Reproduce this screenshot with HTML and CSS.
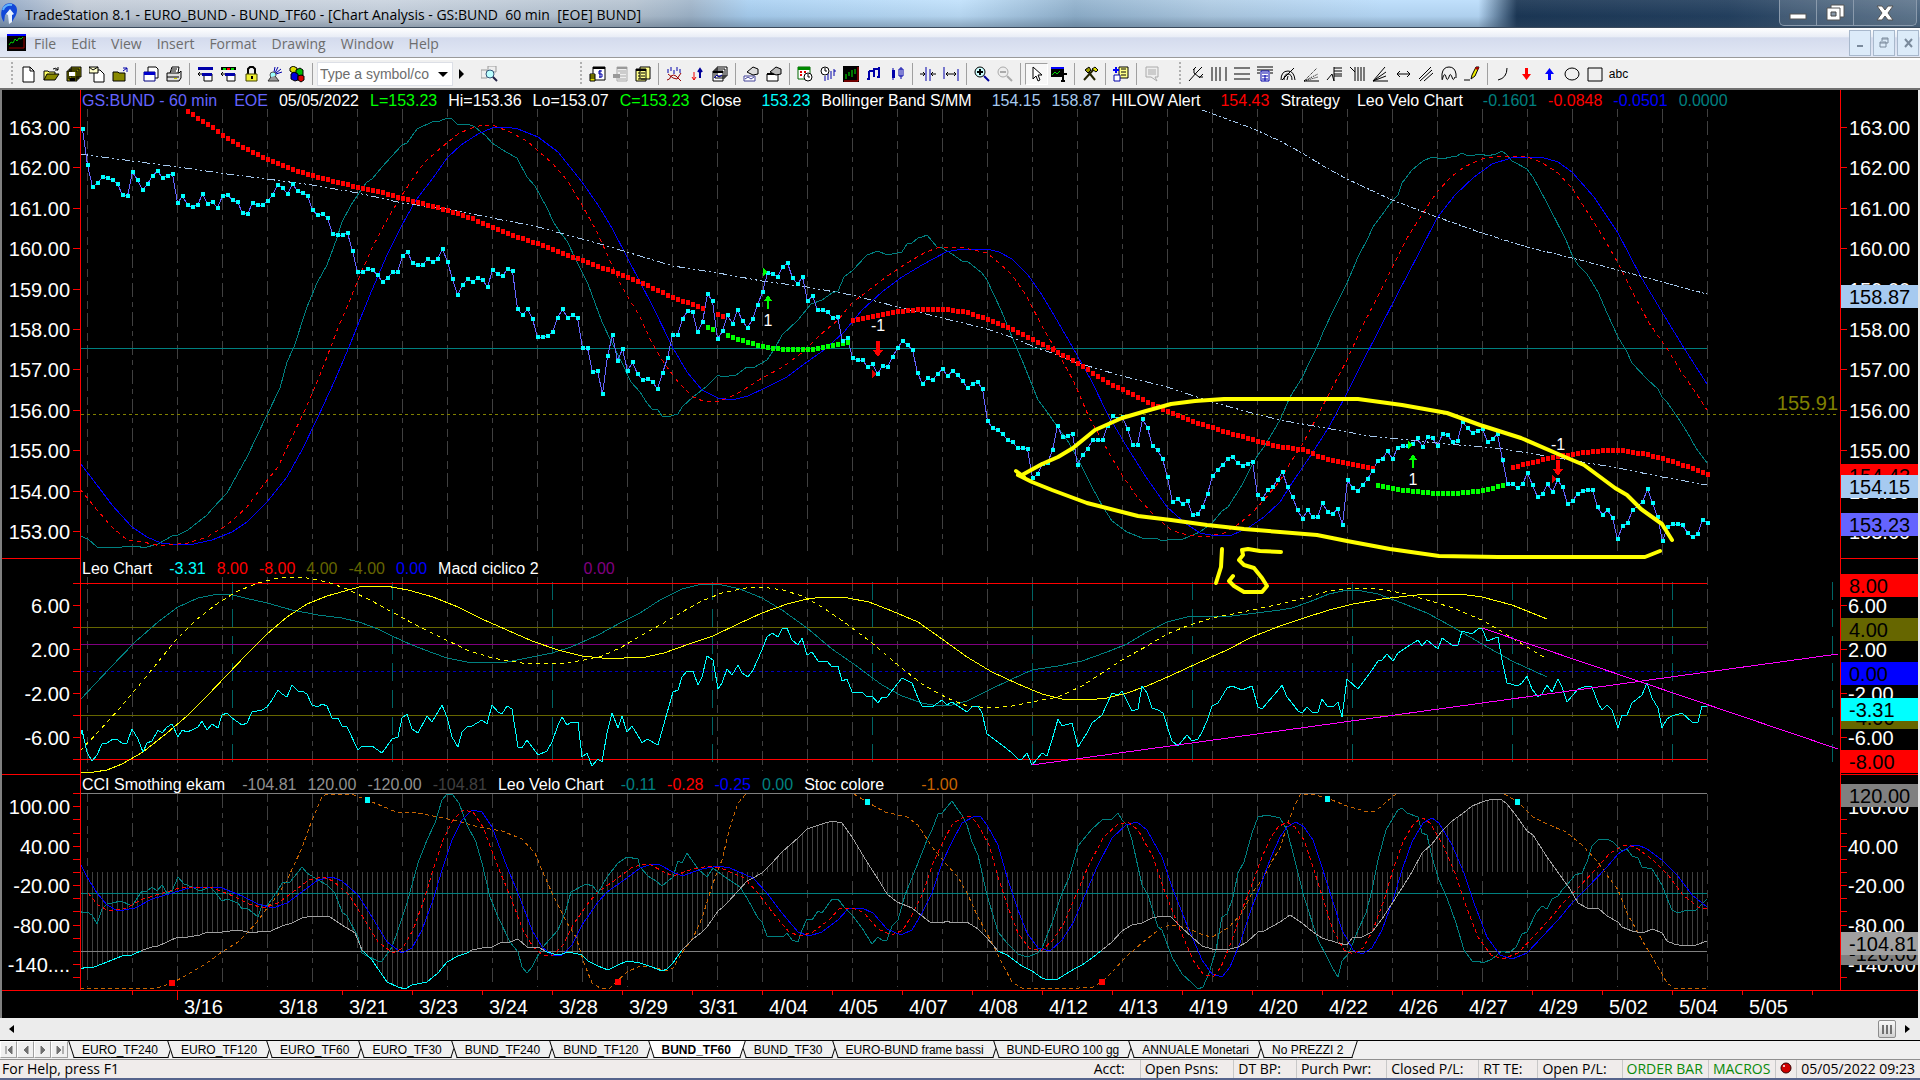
FILE: index.html
```html
<!DOCTYPE html>
<html lang="en">
<head>
    <meta charset="utf-8">
    <title>TradeStation 8.1 - EURO_BUND</title>
    <link rel="stylesheet" href="styles.css">
</head>
<body>
    <header class="titlebar">
        <svg class="app-icon" width="18" height="24" viewBox="0 0 18 24">
            <path d="M4 20C0 15 0 6 6 2c5-2 11 0 11 6 0 5-3 8-5 12l-2-6-2-4-3 3z" fill="#1247d8"/>
            <path d="M6 12l4-5 4 5-2 1v7l-3 2-1-9z" fill="#e8f2ff"/>
            <path d="M3 8C4 4 8 2 12 3" stroke="#5fb4ff" stroke-width="2" fill="none"/>
        </svg>
        <span class="title">TradeStation 8.1 - EURO_BUND - BUND_TF60 - [Chart Analysis - GS:BUND&nbsp; 60 min&nbsp; [EOE] BUND]</span>
        <div class="win-buttons">
            <button aria-label="Minimize"><svg width="18" height="18"><rect x="1" y="10" width="16" height="5" fill="#fff" stroke="#555"/></svg></button>
            <button aria-label="Restore"><svg width="20" height="18"><path d="M6 1h13v12h-13z" fill="#fff" stroke="#555"/><path d="M2 4h13v12h-13z" fill="#fff" stroke="#555"/><path d="M6 8h5v4h-5z" fill="#8898a8" stroke="#444"/></svg></button>
            <button class="close" aria-label="Close"><svg width="20" height="18"><path d="M2 2h5l3 4 3-4h5l-5 7 5 7h-5l-3-4-3 4h-5l5-7z" fill="#fff" stroke="#555"/></svg></button>
        </div>
    </header>

    <nav class="menubar">
        <svg class="doc-icon" width="19" height="17"><path d="M0 0h19v17h-19z" fill="#000"/><path d="M0 0h19v2h-19z" fill="#00f"/><path d="M2 11l2-3 2 1 2-4 2 2 2-3 2 1 2-2" stroke="#0c0" fill="none"/><path d="M2 14h15v-11" stroke="#900" fill="none"/></svg>
        <a href="#">File</a>
        <a href="#">Edit</a>
        <a href="#">View</a>
        <a href="#">Insert</a>
        <a href="#">Format</a>
        <a href="#">Drawing</a>
        <a href="#">Window</a>
        <a href="#">Help</a>
        <div class="mdi-buttons">
            <button aria-label="Minimize chart"><svg width="12" height="12"><path d="M3 8h6v2h-6z" fill="#7a8a9c"/></svg></button>
            <button aria-label="Restore chart"><svg width="12" height="12"><path d="M4 4v-3h6v5h-2M2 5h6v5h-6zM2 6h6M4 2h6" stroke="#7a8a9c" fill="none"/></svg></button>
            <button aria-label="Close chart"><svg width="12" height="12"><path d="M3 2l7 8M10 2l-7 8" stroke="#7a8a9c" stroke-width="2"/></svg></button>
        </div>
    </nav>

    <div class="toolbar">
        <i class="grip"></i>
        <button data-icon="page" aria-label="New"></button>
        <button data-icon="open" aria-label="Open"></button>
        <button data-icon="saveall" aria-label="Save all"></button>
        <button data-icon="mailpage" aria-label="New from template"></button>
        <button data-icon="folder" aria-label="Close workspace"></button>
        <i class="sep"></i>
        <button data-icon="preview" aria-label="Print preview"></button>
        <button data-icon="print" aria-label="Print"></button>
        <i class="sep"></i>
        <button data-icon="barblue" aria-label="Shortcut bar"></button>
        <button data-icon="barcolor" aria-label="Status bar"></button>
        <button data-icon="lock" aria-label="Lock"></button>
        <button data-icon="dish" aria-label="Data network"></button>
        <button data-icon="cubes" aria-label="Power editor"></button>
        <i class="sep"></i>
        <div class="symbol-box">
            <input type="text" placeholder="Type a symbol/co" aria-label="Symbol or command">
            <button aria-label="Symbol list"><svg width="12" height="7"><path d="M1 1h10l-5 5z"/></svg></button>
        </div>
        <button class="go" aria-label="Go"><svg width="6" height="10"><path d="M0 0v10l5-5z"/></svg></button>
        <button data-icon="find" aria-label="Symbol lookup"></button>
        <i class="grip second"></i>
        <button data-icon="money" aria-label="Account"></button>
        <button data-icon="hand" aria-label="Order"></button>
        <button data-icon="list" aria-label="List"></button>
        <i class="sep"></i>
        <button data-icon="study" aria-label="Insert analysis"></button>
        <button data-icon="updown" aria-label="Insert strategy"></button>
        <button data-icon="stack" aria-label="Charts"></button>
        <i class="sep"></i>
        <button data-icon="formatsym" aria-label="Format symbol"></button>
        <button data-icon="formatwin" aria-label="Format window"></button>
        <i class="sep"></i>
        <button data-icon="calclock" aria-label="Sessions"></button>
        <button data-icon="clockbars" aria-label="Interval"></button>
        <button data-icon="screen" aria-label="Chart style"></button>
        <button data-icon="bars" aria-label="OHLC bars"></button>
        <button data-icon="candles" aria-label="Candlesticks"></button>
        <i class="sep"></i>
        <button data-icon="narrow" aria-label="Decrease spacing"></button>
        <button data-icon="widen" aria-label="Increase spacing"></button>
        <i class="sep"></i>
        <button data-icon="zoomin" aria-label="Zoom in"></button>
        <button data-icon="zoomout" aria-label="Zoom out"></button>
        <i class="sep"></i>
        <button class="pressed" data-icon="pointer" aria-label="Pointer"></button>
        <button data-icon="charttext" aria-label="Data tip"></button>
        <i class="sep"></i>
        <button data-icon="tools" aria-label="Tools"></button>
        <i class="sep"></i>
        <button data-icon="addlist" aria-label="Add to list"></button>
        <i class="sep"></i>
        <button data-icon="note" aria-label="Note"></button>
        <i class="grip third"></i>
        <button data-icon="fork" aria-label="Andrews pitchfork"></button>
        <button data-icon="vlines" aria-label="Time cycles"></button>
        <button data-icon="hlines" aria-label="Horizontal lines"></button>
        <button data-icon="calc" aria-label="Calculator lines"></button>
        <button data-icon="arcs" aria-label="Speed arcs"></button>
        <button data-icon="fan" aria-label="Gann fan"></button>
        <button data-icon="retrace" aria-label="Retracement"></button>
        <button data-icon="timezones" aria-label="Time zones"></button>
        <button data-icon="fan2" aria-label="Speed lines"></button>
        <button data-icon="extend" aria-label="Extend"></button>
        <button data-icon="parallel" aria-label="Parallel lines"></button>
        <button data-icon="ghost" aria-label="Cycle"></button>
        <button data-icon="pencil" aria-label="Trendline"></button>
        <i class="sep"></i>
        <button data-icon="arc" aria-label="Arc"></button>
        <button data-icon="down" aria-label="Down arrow"></button>
        <button data-icon="up" aria-label="Up arrow"></button>
        <button data-icon="ellipse" aria-label="Ellipse"></button>
        <button data-icon="rect" aria-label="Rectangle"></button>
        <button class="abc">abc</button>
    </div>

    <main class="chart" id="chart">
        <svg id="plot"></svg>
        <div class="legend price">
            <span class="violet">GS:BUND - 60 min</span>
            <span class="violet wide">EOE</span>
            <span>05/05/2022</span>
            <span class="green">L=153.23</span>
            <span>Hi=153.36</span>
            <span>Lo=153.07</span>
            <span class="green">C=153.23</span>
            <span>Close</span>
            <span class="cyan wider">153.23</span>
            <span>Bollinger Band S/MM</span>
            <span class="sky wider">154.15</span>
            <span class="sky">158.87</span>
            <span>HILOW Alert</span>
            <span class="red wider">154.43</span>
            <span>Strategy</span>
            <span class="wide">Leo Velo Chart</span>
            <span class="teal wider">-0.1601</span>
            <span class="red">-0.0848</span>
            <span class="blue">-0.0501</span>
            <span class="teal">0.0000</span>
        </div>
        <div class="legend leo">
            <span>Leo Chart</span>
            <span class="cyan wide">-3.31</span>
            <span class="red">8.00</span>
            <span class="red">-8.00</span>
            <span class="olive">4.00</span>
            <span class="olive">-4.00</span>
            <span class="blue">0.00</span>
            <span>Macd ciclico 2</span>
            <span class="purple widest">0.00</span>
        </div>
        <div class="legend cci">
            <span>CCI Smothing ekam</span>
            <span class="gray wide">-104.81</span>
            <span class="gray">120.00</span>
            <span class="gray">-120.00</span>
            <span class="dark">-104.81</span>
            <span>Leo Velo Chart</span>
            <span class="teal wide">-0.11</span>
            <span class="red">-0.28</span>
            <span class="blue">-0.25</span>
            <span class="teal">0.00</span>
            <span>Stoc colore</span>
            <span class="orange wider2">-1.00</span>
        </div>
    </main>

    <div class="scrollbar">
        <button aria-label="Scroll left"><svg width="5" height="8"><path d="M5 0v8l-5-4z"/></svg></button>
        <button class="thumb" aria-label="Scroll thumb"><i></i><i></i><i></i></button>
        <button aria-label="Scroll right"><svg width="5" height="8"><path d="M0 0v8l5-4z"/></svg></button>
    </div>

    <div class="tabs">
        <div class="tab-nav">
            <button aria-label="First"><svg width="8" height="8"><path d="M1 0v8M7 0v8l-4-4z"/></svg></button>
            <button aria-label="Previous"><svg width="8" height="8"><path d="M6 0v8l-4-4z"/></svg></button>
            <button aria-label="Next"><svg width="8" height="8"><path d="M2 0v8l4-4z"/></svg></button>
            <button aria-label="Last"><svg width="8" height="8"><path d="M7 0v8M1 0v8l4-4z"/></svg></button>
        </div>
        <button class="tab">EURO_TF240</button>
        <button class="tab">EURO_TF120</button>
        <button class="tab">EURO_TF60</button>
        <button class="tab">EURO_TF30</button>
        <button class="tab">BUND_TF240</button>
        <button class="tab">BUND_TF120</button>
        <button class="tab active">BUND_TF60</button>
        <button class="tab">BUND_TF30</button>
        <button class="tab">EURO-BUND frame bassi</button>
        <button class="tab">BUND-EURO 100 gg</button>
        <button class="tab">ANNUALE Monetari</button>
        <button class="tab">No PREZZI 2</button>
    </div>

    <footer class="statusbar">
        <span class="help">For Help, press F1</span>
        <span>Acct:</span>
        <span>Open Psns:</span>
        <span>DT BP:</span>
        <span>Purch Pwr:</span>
        <span>Closed P/L:</span>
        <span>RT TE:</span>
        <span>Open P/L:</span>
        <span class="on">ORDER BAR</span>
        <span class="on">MACROS</span>
        <span class="led"><svg width="12" height="12"><circle cx="6" cy="6" r="5" fill="#d00000" stroke="#300"/><circle cx="4" cy="4" r="1" fill="#fff"/></svg></span>
        <span class="clock">05/05/2022 09:23</span>
    </footer>

    <script src="chart.js"></script>
</body>
</html>
```
FILE: styles.css
```css
* {
    box-sizing: border-box;
}
body {
    margin: 0;
    height: 100vh;
    display: flex;
    flex-direction: column;
    overflow: hidden;
    background: #f0f0f0;
    font-family: "Open Sans", "Noto Sans", sans-serif;
    font-size: 14px;
    color: #000;
}
button {
    margin: 0;
    padding: 0;
    border: 0;
    background: none;
    font: inherit;
    color: inherit;
    display: flex;
    align-items: center;
    justify-content: center;
}

/* title bar */
.titlebar {
    height: 28px;
    flex: none;
    display: flex;
    align-items: center;
    gap: 7px;
    border-bottom: 1px solid #3a4a5c;
    background: linear-gradient(to bottom, rgba(255,255,255,0.1), rgba(80,100,120,0.1) 60%, rgba(60,80,100,0.4)),
        linear-gradient(to right, #8fa6c4 0, #c3ccd8 4%, #c8d2de 20%, #b4c2d0 33%, #9fb4c9 36%, #a9d0f2 39%, #bfe0fb 50%, #8fb0cc 56%, #aecbe4 63%, #b9dcfb 72%, #b9dcfb 77%, #14304f 79%, #1d3a5a 90%, #4a647e 100%);
}
.title {
    flex: 1;
    padding-top: 2px;
    white-space: nowrap;
    line-height: 20px;
}
.win-buttons {
    display: flex;
    align-self: flex-start;
    margin-right: 3px;
    height: 26px;
    border: 1px solid #8a9aac;
    border-top: 0;
    border-radius: 0 0 5px 5px;
    background: rgba(255,255,255,0.1);
}
.win-buttons button {
    width: 37px;
    border-right: 1px solid #8a9aac;
}
.win-buttons .close {
    width: 62px;
    border-right: 0;
}

/* menu */
.menubar {
    height: 30px;
    flex: none;
    display: flex;
    align-items: center;
    gap: 15px;
    padding-left: 7px;
    background: linear-gradient(#fff, #e9edf6 30%, #d4dbed 34%, #e0e6f4 90%);
    border-bottom: 1px solid #9a9a9a;
}
.menubar a {
    padding-top: 2px;
    color: #6d6d6d;
    text-decoration: none;
}
.doc-icon {
    margin-right: -7px;
}
.mdi-buttons {
    margin-left: auto;
    display: flex;
    gap: 2px;
    padding-right: 1px;
}
.mdi-buttons button {
    width: 22px;
    height: 26px;
    border: 1px solid #a8b8cc;
    background: #dcebf9;
}

/* toolbar */
.toolbar {
    height: 32px;
    flex: none;
    display: flex;
    align-items: center;
    padding-left: 11px;
    border-bottom: 2px solid #707070;
    border-top: 2px solid #fff;
    overflow: hidden;
}
.toolbar > button {
    width: 23px;
    height: 22px;
    flex: none;
}
.toolbar .pressed {
    border: 1px solid #a0a0a0;
    border-right-color: #fff;
    border-bottom-color: #fff;
    background: #f8f8f8;
}
.grip {
    width: 2px;
    height: 24px;
    margin-right: 4px;
    flex: none;
    background: repeating-linear-gradient(#b0b0b0 0 2px, transparent 2px 4px);
}
.grip.second {
    margin-left: 79px;
}
.grip.third {
    margin-left: 15px;
}
.sep {
    width: 1px;
    height: 22px;
    margin: 0 4px 0 3px;
    flex: none;
    background: #a0a0a0;
}
.symbol-box {
    width: 136px;
    height: 24px;
    flex: none;
    display: flex;
    background: #fff;
    border: 1px solid #dcdfe6;
}
.symbol-box input {
    flex: 1;
    min-width: 0;
    border: 0;
    padding: 0 0 0 2px;
    background: none;
    font: 14px "Liberation Sans", Arial, sans-serif;
}
.symbol-box input::placeholder {
    color: #6d6d6d;
}
.symbol-box button {
    width: 18px;
}
.toolbar .go {
    width: 18px;
    margin-right: 7px;
}
.toolbar .abc {
    font: 12px "Liberation Sans", Arial, sans-serif;
}

/* chart */
.chart {
    flex: 1;
    min-height: 0;
    display: grid;
    grid-template-columns: minmax(0, 1fr);
    grid-template-rows: minmax(0, 468fr) minmax(0, 216fr) minmax(0, 244fr);
    background: #000;
    font-family: "Liberation Sans", Arial, sans-serif;
}
#plot {
    grid-area: 1 / 1 / 4 / 2;
    width: 100%;
    height: 100%;
}
#plot text {
    font-size: 20px;
    fill: #fff;
}
#plot text.signal {
    font-size: 16px;
}
#plot text.level {
    fill: #808000;
}
#plot text.tag {
    fill: #000;
}
.legend {
    grid-column: 1;
    display: flex;
    align-items: flex-start;
    gap: 11px;
    padding: 1px 0 0 82px;
    font-size: 16px;
    line-height: 20px;
    color: #fff;
    white-space: nowrap;
}
.price { grid-row: 1; }
.leo { grid-row: 2; }
.cci { grid-row: 3; }
.wide { margin-left: 6px; }
.wider { margin-left: 9px; }
.wider2 { margin-left: 26px; }
.widest { margin-left: 34px; }
.violet { color: #6464ff; }
.green { color: #0f0; }
.cyan { color: #0ff; }
.sky { color: #a6caf0; }
.red { color: #f00; }
.teal { color: #008080; }
.blue { color: #00f; }
.olive { color: #666600; }
.purple { color: #800080; }
.gray { color: #909090; }
.dark { color: #404040; }
.orange { color: #c86400; }

/* scrollbar */
.scrollbar {
    height: 22px;
    flex: none;
    display: flex;
    align-items: center;
    padding: 0 4px 0 3px;
    background: #ececec;
}
.scrollbar button {
    width: 17px;
    height: 18px;
}
.scrollbar .thumb {
    width: 18px;
    margin-left: auto;
    margin-right: 3px;
    gap: 2px;
    border: 1px solid #8c8c8c;
    border-radius: 2px;
    background: linear-gradient(to bottom, #f8f8f8, #d0d0d0);
}
.thumb i {
    width: 2px;
    height: 9px;
    background: #707070;
}

/* workspace tabs */
.tabs {
    height: 19px;
    flex: none;
    display: flex;
    border-top: 1px solid #000;
    font-family: "Liberation Sans", Arial, sans-serif;
    font-size: 12px;
    background: #f0f0f0;
}
.tab-nav {
    display: flex;
    margin-right: 6px;
}
.tab-nav button {
    width: 17px;
    height: 17px;
    border: 1px solid #a0a0a0;
    border-left-color: #fff;
    border-top-color: #fff;
}
.tab-nav path {
    fill: #707070;
    stroke: #707070;
}
.tab {
    position: relative;
    z-index: 0;
    height: 17px;
    padding: 0 15px 0 14px;
    margin-left: -6px;
    white-space: nowrap;
    background: none;
}
.tab::before,
.tab::after {
    content: "";
    position: absolute;
    z-index: -1;
    top: 0;
    bottom: 0;
    background: #f0f0f0;
    border-bottom: 1px solid #000;
}
.tab::before {
    left: 3px;
    right: 50%;
    border-left: 1px solid #000;
    transform: skewX(18deg);
}
.tab::after {
    left: calc(50% - 8px);
    right: 3px;
    border-right: 1px solid #000;
    transform: skewX(-18deg);
}
.tab.active {
    z-index: 1;
    font-weight: bold;
}
.tab.active::before,
.tab.active::after {
    background: #fff;
}

/* status bar */
.statusbar {
    height: 21px;
    flex: none;
    display: flex;
    align-items: center;
    border-top: 1px solid #909090;
    border-bottom: 2px solid #56648c;
    background: #f0eceb;
    line-height: 18px;
    white-space: nowrap;
}
.statusbar span {
    padding: 0 15px 0 4px;
    border-right: 1px solid #c8c8c8;
}
.statusbar .help {
    flex: 1;
    padding-left: 2px;
    border: 0;
}
.statusbar .on {
    padding-right: 5px;
    color: #0a8a0a;
}
.statusbar .led {
    padding: 0 4px;
}
.statusbar .clock {
    padding-right: 5px;
    border: 0;
}
```
FILE: chart.js
```js
// toolbar icons, 16x16
const icons = {
    page: '<path d="M3 1h7l4 4v11h-11z" fill="#fff" stroke="#000"/><path d="M10 1v4h4" fill="none" stroke="#000"/>',
    open: '<path d="M1 14v-9h4l1 1h6v3" fill="#ff6" stroke="#000"/><path d="M1 14l3-6h12l-4 6z" fill="#880" stroke="#000"/><path d="M10 3q3-2 5 1m0-3v3h-3" fill="none" stroke="#000"/>',
    saveall: '<path d="M5 1h10v10h-10zM3 3h10v10h-10zM1 5h10v10h-10z" fill="#880" stroke="#000"/><path d="M3 6h6v4h-6z" fill="#fff"/><path d="M4 12h5v3h-5z" fill="#000"/>',
    mailpage: '<path d="M5 4h6l4 4v8h-10z" fill="#fff" stroke="#000"/><path d="M0 1h9v6h-9z" fill="#ffc" stroke="#000"/><path d="M0 1l4 3 5-3" fill="none" stroke="#000"/>',
    folder: '<path d="M1 15v-9h5l1 1h6v8z" fill="#880" stroke="#000"/><path d="M11 2h4v4M15 2l-4 3" fill="none" stroke="#00a"/>',
    preview: '<path d="M5 1h8l2 2v9h-10z" fill="#fff" stroke="#000"/><path d="M1 6h11v9h-11z" fill="#fff" stroke="#000080"/><path d="M1 6h11v3h-11z" fill="#00c"/>',
    print: '<path d="M4 7l2-6h7l-1 6" fill="#fff" stroke="#000"/><path d="M1 7h12l2-2v7l-2 3h-12z" fill="#ddd" stroke="#000"/><path d="M1 11h12M6 3h5M5 5h5" stroke="#000"/><path d="M8 12h3v1h-3z" fill="#cc0"/>',
    barblue: '<path d="M1 1h15v3h-15z" fill="#00a"/><path d="M5 8h10v7h-8v-7" fill="#fff" stroke="#000"/><path d="M5 7h10v3h-10z" fill="#00a"/><path d="M1 8h4m-2-2l-2 2 2 2" stroke="#000" fill="none"/>',
    barcolor: '<path d="M1 1h15v3h-15z" fill="#000"/><path d="M3 2h3v2h-3z" fill="#0d0"/><path d="M7 2h3v2h-3z" fill="#f00"/><path d="M11 2h3v2h-3z" fill="#0d0"/><path d="M5 8h10v7h-8v-7" fill="#fff" stroke="#000"/><path d="M5 7h10v3h-10z" fill="#00a"/><path d="M1 8h4m-2-2l-2 2 2 2" stroke="#000" fill="none"/>',
    lock: '<path d="M5 8v-5l2-2h3l2 2v5" fill="none" stroke="#000" stroke-width="2"/><path d="M3 8h11v7h-11z" fill="#ee3" stroke="#440"/><path d="M8 10h2v3h-2z"/>',
    dish: '<path d="M9 1l-1 5M12 1l-3 6M15 3l-5 4M16 6l-6 2" stroke="#00a"/><circle cx="7" cy="9" r="3" fill="#9ff" stroke="#555"/><path d="M5 11l-3 4h11l-4-5" fill="#999" stroke="#333"/>',
    cubes: '<path d="M1 2l3-2 4 2v4l-4 1-3-2z" fill="#dd0" stroke="#000"/><path d="M7 4l4-2 3 2v5l-4 1-3-2z" fill="#0b0" stroke="#000"/><path d="M2 8l3-2 4 2v6l-3 1-4-2z" fill="#00d" stroke="#000"/><path d="M9 10l3-1 3 1v4l-3 2-3-2z" fill="#d00" stroke="#000"/>',
    find: '<path d="M0 4h6v8h-6zM7 0h8v6h-8z" fill="#eee" stroke="#999"/><circle cx="9" cy="8" r="4" fill="#bff" stroke="#357"/><path d="M12 11l4 4" stroke="#224" stroke-width="2"/>',
    money: '<path d="M4 1h12v13h-12z" fill="#fff" stroke="#000"/><path d="M4 1h12v2h-12z"/><path d="M13 5h-3v3h3v3h-3M11 4v8" stroke="#00a" fill="none"/><path d="M1 8h5v7h-5z" fill="#dd0" stroke="#000"/><path d="M1 10h5M1 12h5" stroke="#000"/>',
    hand: '<path d="M5 1h10v14h-10z" fill="#eee" stroke="#aaa"/><path d="M5 1h10v2h-10zM1 8h7v4h-7z" fill="#999"/><path d="M6 5h8M8 7h6M8 10h6M6 13h8" stroke="#aaa"/>',
    list: '<path d="M5 1h10v12h-10zM1 3h10v12h-10z" fill="#ff8" stroke="#000"/><path d="M1 3h10v2h-10z"/><path d="M3 7h2M6 7h4M3 10h2M6 10h4M3 13h2M6 13h4" stroke="#000"/>',
    study: '<path d="M2 3v4M5 1v4M8 4v4M11 1v4M14 3v4" stroke="#00a"/><path d="M1 14q3 0 4-4 3-2 5 0l5 5M2 8l5 4 4 1 4-6" fill="none" stroke="#900"/>',
    updown: '<path d="M5 6v8m-2-3l2 3 2-3" stroke="#e00" stroke-width="1" fill="none"/><path d="M11 12v-9m-2 3l2-3 2 3" stroke="#009" stroke-width="2" fill="none"/>',
    stack: '<path d="M5 1h10v9h-10zM3 3h10v9h-10zM1 5h10v10h-10z" fill="#fff" stroke="#000"/><path d="M1 6h10" stroke="#000" stroke-width="2"/><path d="M2 12l3-3 2 2 3-2" stroke="#00a" fill="none"/>',
    formatsym: '<path d="M1 10h11v5h-11z" fill="#fff" stroke="#449"/><path d="M2 13l3-2 3 2 3-2" stroke="#449" fill="none"/><path d="M4 6l6-5 5 2v5l-5 1z" fill="#ddd" stroke="#000"/>',
    formatwin: '<path d="M1 8h11v7h-11z" fill="#fff" stroke="#000"/><path d="M1 7h11v2h-11z"/><path d="M4 6l6-5 5 2v5l-5 1z" fill="#bbb" stroke="#000"/>',
    calclock: '<path d="M1 1h12v12h-12z" fill="#fff" stroke="#060"/><path d="M1 1h12v3h-12z" fill="#080"/><path d="M3 6h2M7 6h2M3 9h2" stroke="#d00" stroke-width="2"/><circle cx="11" cy="11" r="4" fill="#fff" stroke="#000"/><path d="M11 8v3h2" stroke="#000" fill="none"/>',
    clockbars: '<circle cx="5" cy="5" r="4" fill="#fff" stroke="#000"/><path d="M5 2v3h2" stroke="#000" fill="none"/><path d="M5 10v5M8 8v6M11 5v8M14 3v7M14 5h2" stroke="#00a"/>',
    screen: '<path d="M0 0h16v16h-16z"/><path d="M3 8v5M6 6v4M9 4v7M12 3v5" stroke="#0e0"/><path d="M1 15h14v-14" stroke="#d00" fill="none"/>',
    bars: '<path d="M3 5v9M8 2v9M13 1v11M1 13h2M3 5h5M8 3h5M11 11h2" stroke="#00a" stroke-width="2"/>',
    candles: '<path d="M3 4h3v8h-3z" fill="#00a"/><path d="M10 3h4v7h-4z" fill="#fff" stroke="#00a"/><path d="M4 2v12M12 1v12" stroke="#00a"/>',
    narrow: '<path d="M6 1v14M10 3v12" stroke="#00a"/><path d="M0 8h5m-2-2l2 2-2 2M16 8h-5m2-2l-2 2 2 2" stroke="#000" fill="none"/>',
    widen: '<path d="M1 1v12M15 3v12" stroke="#00a"/><path d="M3 8h10M5 6l-2 2 2 2M11 6l2 2-2 2" stroke="#000" fill="none"/>',
    zoomin: '<circle cx="6" cy="6" r="5" fill="#cff" stroke="#000"/><path d="M3 6h6M6 3v6" stroke="#000" stroke-width="2"/><path d="M10 10l5 5" stroke="#009" stroke-width="2"/>',
    zoomout: '<circle cx="6" cy="6" r="5" fill="#eee" stroke="#aaa"/><path d="M3 6h6" stroke="#aaa" stroke-width="2"/><path d="M10 10l5 5" stroke="#aaa" stroke-width="2"/>',
    pointer: '<path d="M5 1v12l3-3 2 5 2-1-2-5h4z" fill="#fff" stroke="#000"/>',
    charttext: '<path d="M0 1h13v10h-13z"/><path d="M0 1h13v2h-13z" fill="#00f"/><path d="M1 9l3-3 2 2 3-3" stroke="#0d0" fill="none"/><path d="M8 8h8M12 8v8M10 15h4" stroke="#000" stroke-width="2"/>',
    tools: '<path d="M2 14l10-11M4 3l9 11" stroke="#220" stroke-width="2"/><path d="M3 4l4-3 2 3-3 3z" fill="#990" stroke="#000"/><path d="M10 3l3-2 3 3-2 2z" fill="#dd0" stroke="#000"/>',
    addlist: '<path d="M6 1h9v11h-9z" fill="#ff8" stroke="#000"/><path d="M8 3h5M8 6h5M8 9h5" stroke="#000"/><path d="M1 9h6v6h-6z" fill="#fff" stroke="#00a"/><path d="M3 1v6M0 4h6" stroke="#00f" stroke-width="2"/>',
    note: '<path d="M2 1h12v10h-3l2 4-6-4h-5z" fill="#eee" stroke="#aaa"/><path d="M4 4h8M4 6h8M4 8h8" stroke="#aaa"/>',
    fork: '<path d="M1 15l8-9M9 6l5-5M6 3v4l5 4h4M8 1l-3 3M15 8l-4 4" fill="none" stroke="#000"/>',
    vlines: '<path d="M1 1v14M5 1v14M9 1v14M15 1v14" stroke="#000"/>',
    hlines: '<path d="M0 2h16M0 8h16M0 13h16" stroke="#000"/>',
    calc: '<path d="M0 1h16M0 4h16M0 7h3M13 7h3" stroke="#000"/><path d="M4 5h8v10h-8z" fill="#fff" stroke="#00a"/><path d="M5 7h6M5 10h6M5 13h6M8 9v6" stroke="#00a"/>',
    arcs: '<path d="M1 14q0-9 7-9 6 0 7 9M4 14q0-6 4-6 4 0 4 6M2 14l12-12M7 14l1-4" fill="none" stroke="#000"/>',
    fan: '<path d="M1 15h15" stroke="#000"/><path d="M1 15l13-13M1 15l14-7M1 15l14-4" stroke="#000" stroke-dasharray="1 1"/>',
    retrace: '<path d="M1 14l5-6 2 7v-14" fill="none" stroke="#000"/><path d="M8 2h8M8 5h8M8 8h8M8 10h8" stroke="#000"/>',
    timezones: '<path d="M1 1l5 5M6 1v14M9 1v14M12 1v14M15 1v14" stroke="#000"/>',
    fan2: '<path d="M1 15h15M1 15l12-14M1 15l13-9M1 15l13-5" fill="none" stroke="#000"/>',
    extend: '<path d="M2 8h13M5 5l-3 3 3 3M12 5l3 3-3 3" stroke="#000" fill="none"/>',
    parallel: '<path d="M1 13l12-12M2 15l12-11M6 15l9-8" stroke="#000"/>',
    ghost: '<path d="M1 12v-4q1-7 7-7t7 7v4M1 12q0 4 1-1 2-5 3 0 1 5 3 0 1-5 3 0 1 5 3 0" fill="none" stroke="#000"/>',
    pencil: '<path d="M0 14h6" stroke="#000"/><path d="M7 13l1-4 4-8h3l-4 9z" fill="#ee0" stroke="#000"/><path d="M12 1h3l-1 3-3-1z" fill="#a00"/>',
    arc: '<path d="M3 14q9-2 9-12" fill="none" stroke="#000"/>',
    down: '<path d="M7 2h3v6h3l-4.500 6-4.500-6h3z" fill="#f00"/>',
    up: '<path d="M7 14h3v-6h3l-4.500-6-4.500 6h3z" fill="#00f"/>',
    ellipse: '<ellipse cx="8" cy="8" rx="7" ry="6" fill="none" stroke="#000"/>',
    rect: '<path d="M1 2h14v13h-14z" fill="none" stroke="#000"/>'
};
document.querySelectorAll('[data-icon]').forEach(b => {
    b.innerHTML = '<svg width="17" height="17" viewBox="0 0 17 17">' + icons[b.dataset.icon] + '</svg>';
});

// close of every bar, drawing units
const closes = [
    129,165,187,183,177,178,180,184,195,196,172,180,190,184,176,171,178,176,174,203,
    196,205,207,205,194,204,202,208,196,195,200,202,213,214,203,205,205,201,195,185,
    188,194,184,191,193,196,210,215,214,218,234,235,235,233,251,272,272,269,270,275,
    282,278,272,272,256,252,263,265,265,259,262,259,249,262,279,295,285,279,282,278,
    280,287,270,274,276,269,271,309,315,309,319,337,337,336,332,318,309,318,315,318,
    348,348,372,371,394,356,335,361,349,371,362,374,380,379,382,389,373,358,335,335,
    319,311,312,332,322,294,301,339,331,315,324,310,321,328,319,305,292,273,274,277,
    267,263,278,284,277,301,296,310,310,312,318,317,341,338,358,360,360,367,364,374,
    366,367,357,348,341,345,350,373,384,378,380,374,369,376,371,375,381,388,384,382,
    389,421,428,430,434,440,442,448,448,449,478,474,464,463,450,426,437,436,434,465,
    455,449,440,440,440,426,416,419,417,429,445,445,419,428,446,450,459,477,502,499,
    504,501,515,514,507,494,476,470,465,459,457,463,466,464,462,495,499,490,487,480,
    472,487,497,510,519,510,517,517,503,512,514,509,525,480,488,491,485,479,471,461,
    459,451,459,448,446,446,444,438,447,437,438,446,434,435,442,441,422,428,433,431,
    429,442,439,434,460,484,484,488,484,473,485,497,494,484,492,480,487,504,501,494,
    491,490,490,507,515,510,518,539,526,523,510,506,502,489,503,517,541,527,524,524,
    525,533,537,534,520,523
];

const velo = '80,536 88,539 97,547 122,547 138,546 143,548 158,544 172,536 178,535 188,530 207,515 212,509 227,493 237,475 247,457 267,415 280,388 287,362 294,347 307,307 317,283 327,265 337,238 342,222 351,205 361,190 367,182 372,179 382,167 402,145 407,143 417,129 432,122 440,121 447,118 452,119 457,124 468,124 475,127 486,136 492,143 506,152 517,158 527,177 535,186 547,208 554,223 560,232 567,241 577,262 588,284 602,322 612,343 622,363 631,382 640,392 647,403 652,409 658,410 662,416 667,417 678,414 682,407 693,397 707,386 718,375 722,377 736,375 747,367 753,368 767,360 775,348 782,335 798,320 811,304 822,300 832,293 838,291 844,277 852,271 867,255 878,251 887,255 902,252 907,244 912,243 918,238 922,237 927,235 937,247 942,248 952,254 962,261 967,261 982,273 987,280 1001,310 1012,337 1022,360 1032,385 1038,400 1042,405 1052,419 1069,443 1082,467 1092,487 1103,507 1112,521 1127,532 1142,538 1155,538 1163,541 1171,539 1183,539 1200,532 1212,523 1222,511 1228,507 1242,485 1252,465 1258,455 1264,447 1280,420 1290,397 1302,378 1309,363 1317,347 1324,330 1335,307 1347,283 1358,257 1368,238 1373,227 1387,208 1393,200 1398,195 1402,183 1412,170 1423,161 1432,157 1442,159 1451,157 1457,156 1462,153 1468,156 1482,154 1487,156 1496,154 1502,151 1507,155 1512,161 1527,169 1533,177 1547,203 1566,240 1572,255 1578,265 1587,274 1598,292 1607,313 1618,337 1627,352 1632,363 1647,379 1658,389 1662,397 1667,402 1678,418 1687,432 1696,448 1707,463';
const veloRed = '80,489 97,510 112,527 127,540 143,542 161,546 178,544 188,543 207,537 227,525 247,507 261,488 278,467 292,437 304,412 322,370 338,328 347,307 358,280 372,248 388,218 402,195 418,171 427,160 442,147 458,134 469,129 482,125 492,125 500,128 512,133 527,141 537,150 552,163 567,180 582,205 596,230 612,265 622,287 640,317 652,343 664,363 678,382 693,397 703,401 716,402 728,398 742,391 762,378 783,367 803,352 820,335 838,320 852,303 869,290 889,275 907,263 926,252 940,247 960,247 973,250 987,253 999,263 1012,275 1026,295 1044,330 1058,353 1073,380 1089,417 1109,453 1122,475 1138,498 1155,516 1171,530 1187,535 1205,537 1224,533 1240,523 1252,513 1264,500 1280,481 1290,463 1302,445 1317,417 1331,390 1347,360 1362,327 1376,300 1392,268 1407,238 1423,213 1437,192 1451,177 1464,167 1482,159 1502,156 1513,156 1527,157 1541,162 1558,173 1572,188 1586,210 1602,235 1618,263 1635,297 1649,323 1666,347 1682,373 1696,393 1707,410';
const veloBlue = '80,463 97,485 112,505 132,527 147,537 161,543 178,545 194,544 212,540 232,532 247,522 267,502 287,477 302,450 318,417 335,380 349,347 359,322 372,290 387,255 402,225 416,200 433,178 447,158 461,145 478,134 492,128 506,127 518,129 538,137 558,152 582,182 598,205 612,228 627,257 640,282 652,305 673,348 687,372 702,390 718,398 732,400 748,396 767,387 787,377 807,362 824,350 844,332 862,310 882,292 902,277 922,265 946,252 962,249 987,249 999,252 1012,259 1028,275 1042,295 1058,322 1073,348 1091,380 1109,417 1127,447 1146,477 1167,507 1185,523 1200,533 1216,536 1232,535 1248,528 1264,517 1280,502 1292,483 1311,455 1329,427 1345,397 1362,363 1378,332 1398,293 1419,253 1437,218 1455,195 1474,177 1492,164 1511,158 1527,157 1541,157 1558,162 1572,172 1594,197 1618,233 1641,277 1662,312 1684,348 1707,384';
const bandMid = '80,154 132,161 178,167 227,174 267,179 312,185 358,193 402,203 447,209 492,218 538,227 582,239 604,245 640,256 673,266 718,273 762,281 807,287 852,295 898,307 942,318 987,329 1011,337 1032,346 1052,353 1078,363 1122,376 1167,387 1212,402 1252,413 1280,420 1325,428 1370,436 1437,443 1504,449 1558,458 1618,468 1662,477 1707,485';
const bandTop = '1202,110 1254,129 1280,141 1302,153 1325,167 1347,179 1392,200 1437,217 1482,233 1527,247 1572,258 1618,270 1662,282 1707,294';
const hilowRed = [
    '187,111 192,114 212,127 227,138 247,149 267,159 292,169 322,178 358,187 378,191 402,198 433,206 447,210 472,218 492,227 518,237 537,243 562,253 582,260 612,271 638,281 673,297 703,308',
    '717,314 723,316',
    '852,320 878,315 898,311 918,309 947,309 967,312 987,319 1012,329 1048,347 1078,363 1107,382 1132,394 1163,409 1192,421 1227,432 1252,439 1277,446 1302,449 1321,457 1347,463 1373,468',
    '1512,467 1527,463 1552,457 1577,453 1602,450 1622,450 1647,454 1672,461 1687,466 1708,474'
];
const hilowGreen = [
    '707,327 713,329',
    '727,335 747,342 767,347 787,349 812,349 832,345 848,342',
    '1377,485 1392,488 1412,491 1437,493 1457,493 1482,490 1503,485'
];

const leo = '80,737 82,730 87,752 92,761 97,755 102,744 107,743 113,739 118,740 123,744 127,743 132,729 138,739 143,752 147,743 152,741 158,730 162,733 167,727 172,724 178,737 182,730 187,732 192,730 198,727 202,721 207,730 212,724 218,728 222,715 227,713 232,718 242,725 247,723 252,712 262,710 267,707 272,700 278,690 282,694 287,697 292,685 298,691 302,691 307,694 312,705 318,707 322,704 327,706 332,718 338,718 342,726 347,727 358,750 362,746 367,747 372,746 382,753 392,739 398,737 402,718 407,714 412,729 418,733 427,716 432,722 442,705 447,717 452,737 458,747 462,732 467,727 472,726 482,720 487,724 492,705 498,712 502,714 507,706 512,709 518,747 522,748 527,740 538,755 547,751 552,742 558,725 562,717 567,725 572,722 578,722 582,757 587,753 592,766 598,759 602,762 607,733 612,713 618,728 622,716 627,732 632,726 640,739 642,743 647,739 658,745 667,713 673,692 678,690 682,677 687,671 693,671 698,685 702,677 707,656 713,660 718,689 722,683 727,669 732,675 738,665 742,673 748,677 753,670 762,650 767,637 772,633 778,637 782,629 787,628 792,640 798,645 802,638 807,655 812,652 818,661 827,661 832,667 838,666 842,681 847,679 852,692 862,692 867,697 872,696 878,703 882,697 887,697 902,678 912,683 918,698 922,706 927,706 932,707 942,700 947,705 952,702 967,712 972,707 978,706 982,713 987,734 1002,745 1012,753 1018,759 1022,759 1027,753 1032,765 1042,753 1047,756 1052,740 1058,719 1062,726 1072,723 1078,747 1087,733 1092,723 1102,715 1112,693 1118,695 1122,691 1132,711 1138,709 1142,686 1147,693 1152,708 1158,710 1163,713 1172,741 1178,746 1187,735 1192,741 1198,739 1202,732 1207,721 1212,706 1218,703 1227,688 1232,686 1242,690 1252,686 1258,707 1262,709 1267,703 1280,688 1282,685 1287,697 1292,703 1298,711 1302,713 1307,707 1313,713 1318,712 1322,699 1327,706 1333,707 1338,702 1342,717 1347,679 1358,689 1372,670 1378,661 1382,660 1387,654 1393,661 1398,653 1407,647 1418,640 1422,646 1427,640 1438,649 1442,638 1452,645 1458,645 1462,631 1472,634 1478,629 1482,628 1487,641 1498,637 1502,660 1507,683 1518,686 1522,683 1527,676 1532,689 1538,697 1542,694 1547,685 1552,692 1558,679 1562,687 1567,702 1578,689 1587,686 1592,687 1598,703 1602,710 1607,705 1612,710 1618,728 1622,715 1627,715 1632,703 1642,695 1647,683 1652,698 1658,708 1662,728 1667,719 1672,716 1682,713 1692,722 1698,722 1702,706 1707,707';
const macdTeal = '80,700 110,668 135,642 158,622 178,607 198,598 218,594 229,594 245,598 267,603 292,610 318,615 342,618 359,622 378,629 392,636 412,645 433,653 447,658 467,662 492,663 507,662 527,658 552,653 571,647 598,635 622,622 640,613 660,600 682,589 702,584 718,584 740,589 762,598 782,610 807,628 832,649 858,667 882,685 902,696 922,703 938,706 952,705 967,701 987,691 1012,679 1032,670 1058,666 1082,661 1107,652 1127,644 1147,632 1167,622 1187,617 1212,616 1232,616 1256,613 1280,610 1292,608 1309,602 1329,594 1347,590 1362,591 1378,594 1402,603 1427,613 1451,626 1482,644 1512,661 1547,677';
const macdYellow = '80,772 94,772 107,770 122,764 143,752 167,733 187,716 207,696 227,675 247,654 267,634 287,617 307,604 327,596 352,589 363,586 386,586 408,590 433,597 458,607 482,619 507,630 532,641 558,650 582,656 602,658 624,658 646,657 664,653 689,644 713,636 738,624 762,613 787,604 807,599 824,597 848,598 869,602 892,611 918,622 942,639 967,657 992,672 1018,684 1042,694 1062,699 1087,700 1107,698 1127,693 1147,686 1172,675 1198,663 1227,650 1252,637 1280,626 1304,618 1329,610 1353,604 1382,599 1407,596 1427,594 1460,594 1482,597 1512,605 1547,619';
const macdDash = '80,751 100,730 120,708 141,683 158,662 176,640 196,620 218,603 238,591 258,583 278,578 292,577 307,578 327,582 347,589 372,601 392,612 412,623 442,638 467,650 492,658 522,663 538,664 565,663 584,660 602,656 622,647 640,636 662,624 682,612 702,601 722,593 746,588 762,587 783,590 802,596 822,607 847,624 872,643 898,665 922,684 947,698 967,706 992,708 1012,706 1032,702 1058,697 1082,686 1102,673 1122,660 1147,646 1167,634 1187,626 1212,618 1238,613 1280,604 1304,598 1329,591 1356,588 1378,589 1402,593 1431,601 1456,609 1484,621 1509,636 1527,647 1547,659';

const cci = '80,969 87,967 94,967 102,964 112,960 122,956 132,955 143,950 152,947 158,946 167,942 178,937 182,938 200,935 207,932 222,932 238,930 252,933 263,931 271,931 282,926 292,923 302,918 312,916 330,917 342,925 355,933 362,950 372,960 387,982 398,987 405,989 412,985 427,982 438,973 447,962 458,956 467,953 472,950 482,948 492,947 502,942 510,942 518,939 527,947 538,947 547,952 558,955 569,952 582,955 588,961 598,966 608,970 618,965 627,961 640,963 652,967 662,971 667,969 673,963 682,950 693,939 702,932 707,927 718,911 722,908 727,903 738,891 747,881 753,878 762,873 772,863 782,852 798,838 807,829 822,824 832,821 842,823 852,837 867,862 878,879 887,894 897,902 912,908 922,916 930,922 942,923 947,921 952,923 967,922 978,929 987,938 998,951 1007,955 1022,966 1032,971 1042,978 1048,980 1058,979 1069,972 1078,967 1082,965 1092,958 1102,950 1112,942 1122,931 1132,925 1142,923 1152,918 1162,916 1171,917 1181,927 1192,937 1202,946 1212,949 1230,949 1238,947 1247,942 1258,932 1264,931 1280,922 1290,915 1302,923 1313,932 1322,938 1338,943 1347,945 1353,937 1362,937 1372,932 1382,919 1393,902 1402,888 1412,872 1422,853 1432,844 1442,831 1452,821 1462,814 1472,806 1482,802 1492,799 1502,800 1507,804 1518,818 1527,831 1533,835 1547,857 1562,878 1570,889 1578,903 1587,908 1598,908 1607,916 1618,922 1622,927 1632,931 1642,933 1653,929 1662,933 1667,941 1674,944 1684,946 1696,945 1707,941';
const fastTeal = '80,909 82,913 87,912 92,915 97,924 102,909 107,904 112,903 121,901 132,906 142,891 147,891 152,887 157,891 162,885 167,893 172,891 178,877 184,884 192,887 200,891 210,887 216,893 222,901 227,899 238,903 242,909 247,908 258,917 262,905 267,906 278,890 282,883 290,882 302,867 307,873 318,880 327,885 335,893 342,912 347,916 358,937 362,953 367,956 378,961 382,961 392,947 398,930 407,903 418,863 427,840 435,823 442,800 447,794 452,794 459,803 467,825 476,842 482,863 490,897 498,917 510,942 518,952 522,967 527,973 532,967 542,948 558,930 565,913 571,892 586,884 593,886 598,893 607,877 618,863 627,857 638,859 640,867 648,876 656,881 662,886 673,877 678,861 682,863 687,853 698,869 707,877 713,868 722,875 740,887 747,898 758,918 762,922 767,936 783,937 787,933 792,940 798,942 802,930 807,919 812,920 818,911 822,913 832,899 838,899 844,907 852,915 862,928 872,944 878,937 882,940 887,940 892,926 898,920 905,895 918,863 927,840 932,830 938,814 942,813 952,801 958,810 962,815 967,825 972,842 978,855 987,895 998,932 1007,943 1018,954 1027,957 1038,953 1042,948 1052,923 1062,893 1069,878 1078,846 1082,841 1092,829 1102,820 1112,819 1118,813 1122,820 1127,825 1132,840 1142,885 1148,895 1158,927 1162,930 1172,957 1182,974 1192,983 1198,989 1203,987 1209,973 1216,950 1222,917 1227,914 1233,897 1238,873 1244,862 1252,833 1258,817 1267,815 1280,818 1287,830 1294,857 1304,897 1318,940 1327,957 1333,969 1338,977 1342,961 1349,953 1358,930 1366,913 1372,890 1378,860 1386,830 1393,818 1398,810 1402,808 1407,813 1418,817 1422,833 1427,835 1432,857 1439,880 1447,898 1456,923 1464,950 1472,961 1478,961 1483,963 1492,959 1502,951 1509,953 1516,947 1522,934 1527,932 1536,913 1542,906 1547,909 1552,899 1558,896 1562,890 1567,885 1575,875 1582,873 1587,862 1592,846 1598,840 1607,839 1613,842 1622,851 1627,849 1632,856 1638,858 1642,867 1652,869 1662,885 1667,898 1672,910 1678,913 1687,910 1696,910 1707,899';
const fastBlue = '80,863 87,877 97,893 107,905 118,911 135,908 152,899 172,893 192,887 222,888 242,896 258,904 273,908 287,903 302,892 318,880 332,877 342,881 358,895 372,917 387,942 402,953 412,948 422,930 433,900 442,870 452,840 462,820 472,810 482,812 492,827 507,867 518,893 532,930 542,947 552,955 562,955 572,945 582,925 598,902 607,892 627,878 640,868 652,864 660,865 673,872 682,876 702,869 718,866 730,868 753,878 767,893 782,913 798,932 809,936 822,932 838,920 848,909 862,908 873,913 887,929 901,935 912,930 922,913 932,893 942,863 952,842 962,823 975,816 981,817 987,825 998,845 1007,877 1018,910 1027,933 1038,948 1050,951 1062,940 1073,923 1082,902 1097,867 1112,838 1126,825 1137,822 1147,830 1162,857 1172,887 1187,925 1202,960 1212,974 1222,977 1230,967 1240,943 1252,907 1260,887 1271,857 1280,837 1287,827 1296,822 1304,827 1313,840 1322,867 1333,902 1342,930 1353,950 1362,954 1372,948 1382,930 1393,900 1402,870 1412,842 1423,823 1432,818 1439,823 1452,845 1464,873 1474,903 1487,937 1500,955 1512,959 1527,953 1542,937 1558,920 1572,903 1587,888 1607,867 1618,854 1631,846 1638,845 1647,849 1662,860 1678,876 1692,895 1707,907';
const stoc = [
    '80,988 157,988 172,983 187,975 207,963 222,952 238,942 247,933 257,922 267,908 278,895 287,880 302,848 312,820 318,806 322,797 327,794 351,794 367,800 382,806 396,812 412,812 433,816 458,821 478,827 502,831 522,839 535,853 542,870 552,893 567,923 576,937 584,963 592,983 600,988 610,988 627,972 640,966 652,967 667,971 673,968 682,953 693,938 702,918 713,883 722,860 730,827 738,803 746,794',
    '854,794 867,802 885,812 907,817 918,825 932,847 947,865 958,877 967,893 978,917 992,943 1002,963 1012,982 1022,988 1079,988 1093,987 1102,982 1112,972 1127,956 1142,943 1162,927 1173,925 1187,928 1203,935 1212,937 1228,928 1242,913 1252,893 1262,880 1271,863 1280,848 1288,823 1294,807 1300,795 1311,794 1327,798 1347,806 1368,812 1376,811 1386,802 1396,794',
    '1504,794 1518,802 1533,817 1547,824 1566,832 1582,845 1598,862 1607,875 1618,890 1627,913 1642,940 1658,967 1667,983 1674,988 1707,988'
];

const pen = [
    '1016,471 1024,477',
    '1022,475 1042,464 1058,457 1073,448 1095,430 1122,418 1146,411 1171,404 1195,401 1224,399 1280,399 1358,399 1402,405 1447,413 1480,425 1521,438 1558,454 1584,465 1615,488 1627,495 1641,509 1662,524 1672,540',
    '1018,475 1032,482 1052,490 1087,503 1138,516 1171,520 1207,525 1244,529 1280,532 1317,535 1347,541 1390,549 1439,556 1498,557 1645,557 1660,551',
    '1222,549 1221,567 1216,583',
    '1281,552 1260,551 1248,549 1242,550 1243,555 1239,560 1244,565 1254,568 1262,578 1267,586 1262,592 1244,592 1234,586 1229,581 1233,576'
];

const dates = ['3/21', '3/23', '3/24', '3/28', '3/29', '3/31', '4/04', '4/05', '4/07', '4/08', '4/12',
    '4/13', '4/19', '4/20', '4/22', '4/26', '4/27', '4/29', '5/02', '5/04', '5/05'];

const TOP = 90, WIDTH = 1920, HEIGHT = 928;
const LEFT = 81, RIGHT = 1840, LAST = 1707;

const parse = s => s.split(' ').map(p => p.split(',').map(Number));

// value of a line at x
function at(points, x) {
    for (let i = 1; i < points.length; i++) {
        let [x0, y0] = points[i - 1], [x1, y1] = points[i];
        if (x <= x1) return y0 + (y1 - y0) * (x - x0) / (x1 - x0);
    }
    return points[points.length - 1][1];
}

function draw() {
    const box = document.getElementById('chart');
    const sx = box.clientWidth / WIDTH, sy = box.clientHeight / HEIGHT;
    const X = x => Math.round(x * sx * 10) / 10;
    const Y = y => Math.round((y - TOP) * sy * 10) / 10;
    let out = '';

    const line = (x1, y1, x2, y2, color, dash, width) => {
        out += `<line x1="${X(x1)}" y1="${Y(y1)}" x2="${X(x2)}" y2="${Y(y2)}" stroke="${color}" stroke-width="${width || 1}"${dash ? ` stroke-dasharray="${dash}"` : ''}/>`;
    };
    const curve = (points, color, dash, width, extra) => {
        out += `<polyline points="${points.map(p => X(p[0]) + ',' + Y(p[1])).join(' ')}" fill="none" stroke="${color}" stroke-width="${width || 1}"${dash ? ` stroke-dasharray="${dash}"` : ''} ${extra || ''}/>`;
    };
    const rect = (x, y, w, h, color) => {
        out += `<rect x="${X(x)}" y="${Y(y)}" width="${w}" height="${h}" fill="${color}"/>`;
    };
    const text = (x, y, s, cls, anchor) => {
        out += `<text x="${X(x)}" y="${Y(y)}" class="${cls || ''}" text-anchor="${anchor || 'start'}">${s}</text>`;
    };
    const tag = (y, s, color) => {
        rect(1841, y, 77 * sx, 23, color);
        text(1849, y + 19, s, 'tag');
    };

    out += `<defs><clipPath id="oversold"><rect x="0" y="${Y(951)}" width="100%" height="${60 * sy}"/></clipPath></defs><g shape-rendering="crispEdges">`;

    // session grid
    for (let i = 0; i < 37; i++) {
        let x = 87.5 + 45 * i;
        for (let [a, b] of [[109, 555], [577, 771], [794, 987]])
            line(x, a, x, b, '#404040', i % 2 ? '14 5 5 5' : '8 4 14 6');
    }
    for (let x = 232; x < RIGHT; x += 160) line(x, 582, x, 768, '#006464', '18 9');

    // histogram
    const cciPoints = parse(cci);
    for (let x = 82.5; x <= LAST; x += 5) line(x, 872, x, at(cciPoints, x), '#404040');

    // levels
    line(LEFT, 348, LAST, 348, '#008080');
    line(LEFT, 414, 1836, 414, '#808000', '3 3');
    line(LEFT, 583, LAST, 583, '#f00');
    line(LEFT, 759, LAST, 759, '#f00');
    line(LEFT, 627, LAST, 627, '#666600');
    line(LEFT, 715, LAST, 715, '#666600');
    line(LEFT, 644, LAST, 644, '#800080');
    line(LEFT, 671, LAST, 671, '#0000c0', '3 3');
    line(LEFT, 793, LAST, 793, '#808080');
    line(LEFT, 951, LAST, 951, '#808080');
    line(LEFT, 893, LAST, 893, '#008080');

    // price pane
    curve(parse(velo), '#008080');
    curve(parse(veloBlue), '#00f');
    curve(parse(veloRed), '#f00', '4 4');
    curve(parse(bandMid), '#a6caf0', '8 3 2 3 2 3');
    curve(parse(bandTop), '#a6caf0', '5 2 2 2');
    curve(closes.map((y, i) => [82.5 + 5 * i, y]), '#6464ff');
    const dots = (list, color) => list.map(parse).forEach(p => {
        for (let x = 82.5; x <= LAST + 1; x += 5)
            if (x >= p[0][0] && x <= p[p.length - 1][0]) rect(x - 2, at(p, x) - 2, 4, 5, color);
    });
    dots(hilowRed, '#f00');
    dots(hilowGreen, '#0f0');
    closes.forEach((y, i) => rect(82.5 + 5 * i - 2, y - 2, 4, 4, '#0ff'));

    // leo pane
    curve(parse(macdTeal), '#008080');
    curve(parse(macdYellow), '#ff0');
    curve(parse(macdDash), '#ff0', '4 4');
    curve(parse(leo), '#0ff');
    line(1032, 765, 1838, 654, '#f0f');
    line(1482, 628, 1838, 749, '#f0f');

    // cci pane
    const fast = parse(fastBlue);
    stoc.forEach(s => curve(parse(s), '#c86400', '4 3'));
    curve(parse(fastTeal), '#008080');
    curve(fast, '#00f');
    curve(fast.map(p => [p[0] - 9, p[1]]).filter(p => p[0] > 80).concat([[1707, 909]]), '#f00', '4 3');
    curve(cciPoints, '#a0a0a0');
    curve(cciPoints, '#0ff', '', 1, 'clip-path="url(#oversold)"');
    [[367, 800], [867, 802], [1327, 799], [1517, 802]].forEach(p => rect(p[0] - 2, p[1] - 3, 5, 6, '#0ff'));
    [[172, 983], [618, 982], [1102, 982]].forEach(p => rect(p[0] - 3, p[1] - 3, 6, 6, '#f00'));

    // buy and sell marks
    [[768, 296], [1413, 455]].forEach(([x, y]) => {
        curve([[x, y + 13], [x, y + 2]], '#0f0', '', 2);
        curve([[x - 3, y + 5], [x, y + 1], [x + 3, y + 5]], '#0f0', '', 2);
        text(x, y + 30, '1', 'signal', 'middle');
    });
    [[878, 341], [1558, 460]].forEach(([x, y]) => {
        curve([[x, y], [x, y + 12]], '#f00', '', 4);
        out += `<path d="M${X(x) - 5} ${Y(y) + 9}h10l-5 7z" fill="#f00"/>`;
        text(x, y - 10, '-1', 'signal', 'middle');
    });
    [[763, 272, '#0f0'], [1408, 445, '#0f0'], [872, 374, '#d00'], [1552, 479, '#d00']].forEach(([x, y, color]) => {
        out += `<path d="M${X(x)} ${Y(y) - 4}v8l4-4z" fill="${color}"/>`;
    });

    text(1838, 410, '155.91', 'level', 'end');

    // axes
    line(80.5, TOP, 80.5, 990, '#f00');
    line(1840.5, TOP, 1840.5, 990, '#f00');
    line(2, 990, 1918, 990, '#f00');
    [558, 774].forEach(y => { line(2, y, 80, y, '#f00'); line(1840, y, 1918, y, '#f00'); });
    const tick = y => { line(73, y, 80, y, '#f00'); line(1841, y, 1847, y, '#f00'); };
    for (let v = 163; v >= 153; v--) {
        let y = Math.round(127 + (163 - v) * 40.4);
        tick(y);
        text(70, y + 8, v + '.00', '', 'end');
        text(1849, y + 8, v + '.00');
    }
    for (let v = 8; v >= -8; v -= 2) {
        let y = 671 - v * 11;
        tick(y);
        if (v % 4) {
            text(70, y + 8, v + '.00', '', 'end');
            text(1848, y + 8, v + '.00');
        }
    }
    for (let v = 120; v >= -160; v -= 20) {
        let y = Math.round(872 - v * 0.658);
        tick(y);
        if ((v + 140) % 60 === 0) {
            text(70, y + 8, v === -140 ? '-140....' : v + '.00', '', 'end');
            text(1848, y + 8, v + '.00');
        }
    }
    tag(464, '154.43', '#f00');
    tag(475, '154.15', '#a6caf0');
    tag(285, '158.87', '#a6caf0');
    tag(513, '153.23', '#6464ff');
    tag(574, '8.00', '#f00');
    tag(618, '4.00', '#666600');
    tag(662, '0.00', '#00f');
    tag(706, '-4.00', '#666600');
    tag(698, '-3.31', '#0ff');
    tag(750, '-8.00', '#f00');
    tag(784, '120.00', '#808080');
    tag(942, '-120.00', '#808080');
    tag(932, '-104.81', '#a0a0a0');

    line(132, 990, 132, 995, '#f00');
    line(177, 990, 177, 1000, '#f00');
    text(184, 1014, '3/16');
    text(279, 1014, '3/18');
    dates.forEach((d, i) => {
        let x = 342 + 70 * i;
        line(x, 990, x, 995, '#f00');
        text(x + 7, 1014, d);
    });
    line(1812, 990, 1812, 995, '#f00');

    // window frame
    rect(0, TOP, 2, box.clientHeight, '#808080');
    rect(1918, TOP, 2, box.clientHeight, '#e8e8e8');
    out += '</g>';

    pen.forEach(p => curve(parse(p), '#ff0', '', 4, 'stroke-linejoin="round" stroke-linecap="round"'));

    document.getElementById('plot').innerHTML = out;
}

draw();
window.addEventListener('resize', draw);
```
